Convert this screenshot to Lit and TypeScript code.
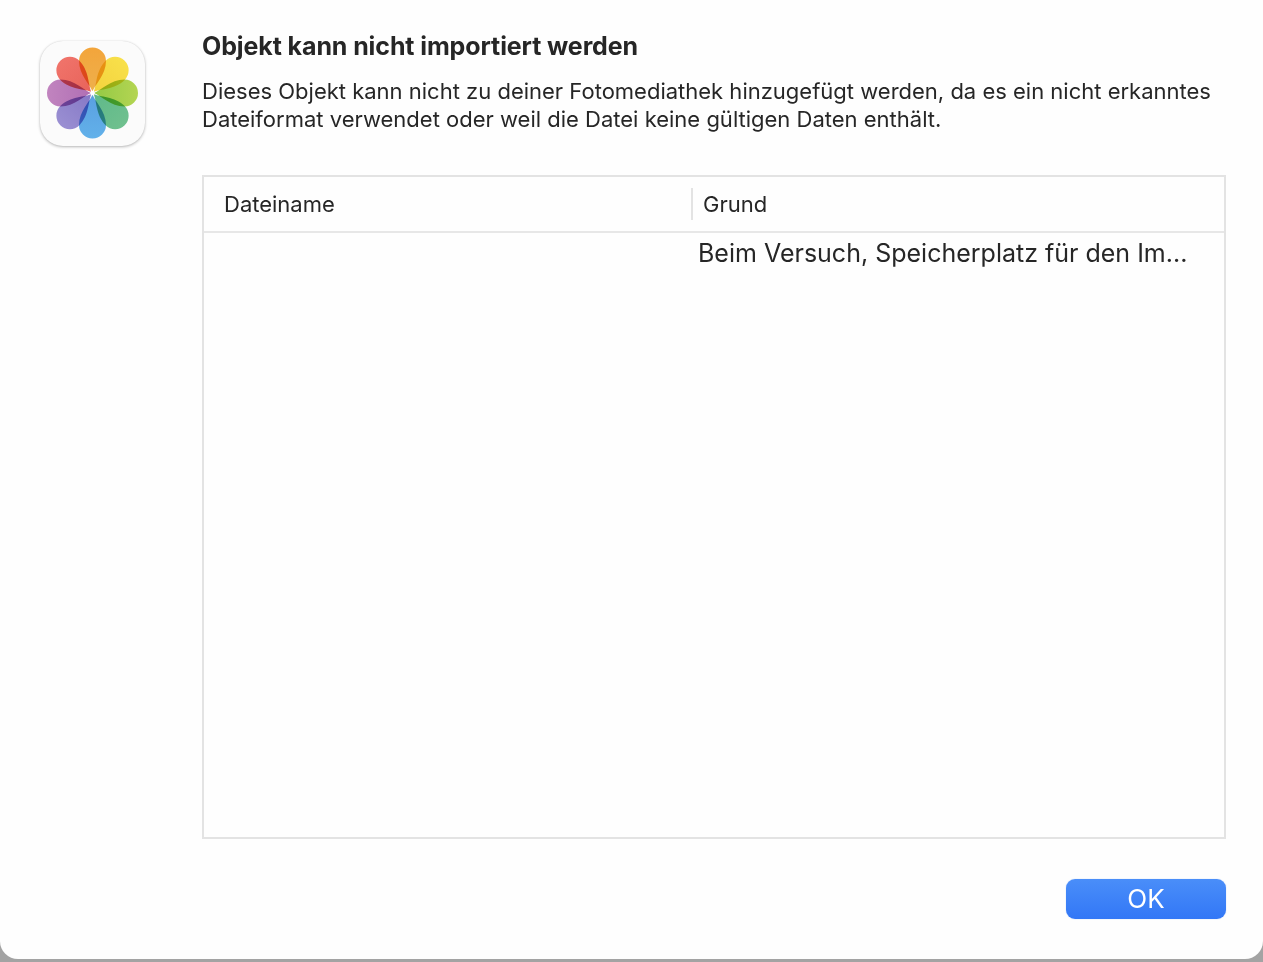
import { LitElement, html, css, svg } from "lit";
import { customElement } from "lit/decorators.js";

const petals = [
  ["#f3a53b", "#eeb04c", 0],
  ["#f8e04a", "#f3d23e", 45],
  ["#b4d552", "#93c945", 90],
  ["#6fc08e", "#5fb98a", 135],
  ["#62b1ea", "#5a9fe0", 180],
  ["#9a8fd2", "#8578c6", 225],
  ["#c184bf", "#b06fb4", 270],
  ["#f0736a", "#e8635a", 315],
] as const;

@customElement("app-root")
export class AppRoot extends LitElement {
  static styles = css`
    :host {
      display: block;
      height: 962px;
      background: #a3a3a3;
      font-family: Inter, "Liberation Sans", sans-serif;
      color: #262626;
    }
    .window {
      box-sizing: border-box;
      height: 959px;
      background: #fefefe;
      border-radius: 0 0 18px 18px;
      display: grid;
      grid-template-columns: 105px 1fr;
      column-gap: 57px;
      padding: 0 37px 0 40px;
    }
    .icon {
      margin-top: 41px;
      width: 105px;
      height: 105px;
      border-radius: 23px;
      background: #fbfbfb;
      box-shadow: 0 1px 3px rgba(0, 0, 0, 0.28), 0 0 1px rgba(0, 0, 0, 0.12);
      display: flex;
    }
    .petal {
      mix-blend-mode: multiply;
    }
    .main {
      display: flex;
      flex-direction: column;
      min-width: 0;
    }
    h1 {
      margin: 31px 0 0;
      font-size: 25px;
      line-height: 30px;
      font-weight: 700;
      letter-spacing: -0.1px;
    }
    p {
      margin: 16px 0 0;
      font-size: 22px;
      line-height: 28px;
      font-weight: 400;
      white-space: nowrap;
    }
    .table {
      box-sizing: border-box;
      margin-top: 42px;
      height: 664px;
      border: 2px solid #e3e3e3;
      display: flex;
      flex-direction: column;
    }
    .head {
      box-sizing: border-box;
      height: 56px;
      flex: none;
      border-bottom: 2px solid #e7e7e7;
      display: grid;
      grid-template-columns: 487px 1fr;
      align-items: center;
      font-size: 22px;
    }
    .head span:first-child {
      padding-left: 20px;
    }
    .head span:last-child {
      border-left: 2px solid #e3e3e3;
      padding-left: 10px;
      line-height: 32px;
    }
    .row {
      padding: 3px 0 0 494px;
      font-size: 25px;
      line-height: 34px;
      white-space: nowrap;
    }
    .foot {
      margin-top: 40px;
      display: flex;
      justify-content: flex-end;
    }
    button {
      width: 160px;
      height: 40px;
      border: 0;
      border-radius: 9px;
      background: linear-gradient(#4a8ef9, #3277f6);
      box-shadow: 0 0 1px rgba(50, 120, 246, 0.5);
      color: #fff;
      font: 400 26px/40px Inter, "Liberation Sans", sans-serif;
      padding: 0;
    }
  `;

  render() {
    return html`
      <div class="window">
        <div class="icon">
          <svg width="105" height="105" viewBox="-52.5 -52 105 105">
            <defs>
              ${petals.map(
                (p, i) => svg`<linearGradient id="g${i}" x1="0" y1="1" x2="0" y2="0">
                  <stop offset="0" stop-color=${p[1]}></stop>
                  <stop offset="1" stop-color=${p[0]}></stop>
                </linearGradient>`
              )}
            </defs>
            <g style="isolation:isolate">
              ${petals.map(
                (p, i) => svg`<path
                  class="petal"
                  fill="url(#g${i})"
                  transform="rotate(${p[2]})"
                  d="M0 -1.5 C-2 -8 -13.5 -18 -13.5 -32 A13.5 13.5 0 0 1 13.5 -32 C13.5 -18 2 -8 0 -1.5 Z"
                ></path>`
              )}
              <circle r="2.2" fill="#fff"></circle>
            </g>
          </svg>
        </div>
        <div class="main">
          <h1>Objekt kann nicht importiert werden</h1>
          <p>
            Dieses Objekt kann nicht zu deiner Fotomediathek hinzugefügt werden, da es ein nicht erkanntes<br />
            Dateiformat verwendet oder weil die Datei keine gültigen Daten enthält.
          </p>
          <div class="table">
            <div class="head"><span>Dateiname</span><span>Grund</span></div>
            <div class="row">Beim Versuch, Speicherplatz für den Im...</div>
          </div>
          <div class="foot"><button>OK</button></div>
        </div>
      </div>
    `;
  }
}
